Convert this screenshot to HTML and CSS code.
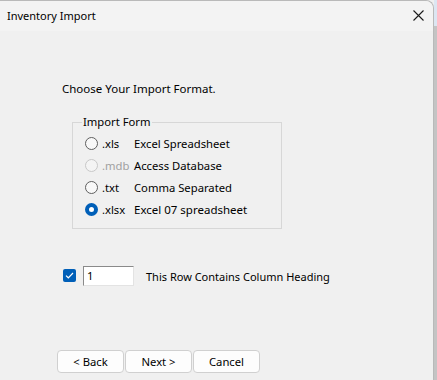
FILE: index.html
```html
<!DOCTYPE html>
<html>
<head>
<meta charset="utf-8">
<link rel="stylesheet" href="styles.css">
</head>
<body>
<div class="screen">
  <div class="window">
    <div class="titlebar">
      <span class="title">Inventory Import</span>
      <svg class="close" width="11" height="11" viewBox="0 0 11 11"><path d="M0.5 0.5 L10.5 10.5 M10.5 0.5 L0.5 10.5" stroke="#1a1a1a" stroke-width="1.1" fill="none"/></svg>
    </div>
    <div class="content">
      <p class="prompt">Choose Your Import Format.</p>
      <fieldset class="group">
        <legend class="legend">Import Form</legend>
        <div class="opt"><span class="radio"></span><span class="ext">.xls</span><span class="desc">Excel Spreadsheet</span></div>
        <div class="opt disabled"><span class="radio"></span><span class="ext">.mdb</span><span class="desc">Access Database</span></div>
        <div class="opt"><span class="radio"></span><span class="ext">.txt</span><span class="desc">Comma Separated</span></div>
        <div class="opt"><span class="radio checked"></span><span class="ext">.xlsx</span><span class="desc wide">Excel 07 spreadsheet</span></div>
      </fieldset>
      <div class="heading-row">
        <span class="check"><svg width="9" height="7" viewBox="0 0 9 7"><path d="M1 3.6 L3.3 5.8 L8 1" stroke="#fff" stroke-width="1.2" fill="none"/></svg></span>
        <span class="field">1</span>
        <span class="label">This Row Contains Column Heading</span>
      </div>
      <div class="buttons">
        <span class="btn">&lt; Back</span>
        <span class="btn">Next &gt;</span>
        <span class="btn">Cancel</span>
      </div>
    </div>
  </div>
  <div class="edge"><div class="edge-top"></div><div class="edge-rest"></div></div>
</div>
</body>
</html>
```
FILE: styles.css
```css
html, body {
  margin: 0;
  padding: 0;
}
body {
  width: 437px;
  height: 380px;
  overflow: hidden;
  font-family: "Noto Sans", "Open Sans", sans-serif;
  font-size: 11.25px;
  color: #000;
}
.screen {
  display: flex;
  width: 437px;
  height: 380px;
  background: #f0f0f0;
}
.window {
  width: 434px;
  height: 380px;
  flex: none;
  background: #f0f0f0;
  border-top: 1px solid #b9b9b9;
  border-right: 1px solid #b9b9b9;
  border-top-right-radius: 8px;
  box-sizing: border-box;
  display: flex;
  flex-direction: column;
}
.titlebar {
  height: 30px;
  flex: none;
  display: flex;
  align-items: center;
  justify-content: space-between;
  padding: 0 9px 0 7px;
  background: #f3f3f3;
  border-top-right-radius: 8px;
}
.title {
  font-size: 11px;
  line-height: 16px;
  margin-top: 0;
}
.close {
  display: block;
  margin-top: -1px;
}
.content {
  padding: 50px 0 0 62px;
  display: flex;
  flex-direction: column;
  align-items: flex-start;
}
.prompt {
  margin: 0;
  line-height: 16px;
  font-size: 11.5px;
}
.group {
  margin: 17px 0 0 10px;
  width: 210px;
  box-sizing: border-box;
  border: 1px solid #d7d7d7;
  padding: 2px 0 8px 12px;
}
.legend {
  padding: 0 1px;
  margin-left: -3px;
  line-height: 16px;
}
.opt {
  display: flex;
  align-items: center;
  height: 22px;
}
.radio {
  width: 13px;
  height: 13px;
  box-sizing: border-box;
  border: 1px solid #5f5f5f;
  border-radius: 50%;
  background: #f8f8f8;
  flex: none;
}
.radio.checked {
  border: 4px solid #005fb8;
  background: #fff;
}
.ext {
  margin-left: 4px;
  width: 32px;
}
.wide {
  font-size: 11.5px;
}
.disabled .radio {
  border-color: #c8c8c8;
  background: #f4f4f4;
}
.disabled .ext {
  color: #a0a0a0;
}
.heading-row {
  margin-top: 37px;
  display: flex;
  align-items: center;
  height: 20px;
  margin-left: 1px;
}
.check {
  width: 13px;
  height: 13px;
  background: #005fb8;
  border-radius: 2px;
  display: flex;
  align-items: center;
  justify-content: center;
  margin-top: -2px;
}
.field {
  margin-left: 7px;
  width: 51px;
  height: 20px;
  box-sizing: border-box;
  background: #fff;
  border-top: 1px solid #8a8a8a;
  border-left: 1px solid #8a8a8a;
  border-right: 1px solid #e3e3e3;
  border-bottom: 1px solid #e3e3e3;
  padding-left: 3px;
  line-height: 18px;
}
.label {
  margin-left: 12px;
  line-height: 16px;
  margin-top: 2px;
  font-size: 11px;
}
.buttons {
  margin-top: 64px;
  margin-left: -5px;
  display: flex;
  gap: 1px;
}
.btn {
  width: 67px;
  height: 23px;
  box-sizing: border-box;
  border: 1px solid #d0d0d0;
  border-radius: 4px;
  background: #fdfdfd;
  display: flex;
  align-items: center;
  justify-content: center;
  line-height: 16px;
}
.edge {
  flex: 1;
  display: flex;
  flex-direction: column;
}
.edge-top {
  height: 26px;
  background: #dce6f2;
}
.edge-rest {
  flex: 1;
  background: #c4c4c4;
}
```
